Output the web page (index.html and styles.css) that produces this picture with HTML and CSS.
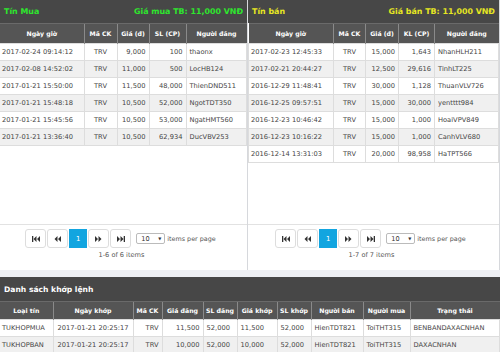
FILE: index.html
```html
<!DOCTYPE html>
<html lang="vi">
<head>
  <meta charset="UTF-8">
  <title>Tín Mua / Tín bán</title>
  <link rel="stylesheet" href="styles.css">
</head>
<body>

  <div class="top">
    <div class="panel">
      <div class="panel-head">
        <span class="buy">Tín Mua</span>
        <span class="buy">Giá mua TB: 11,000 VNĐ</span>
      </div>
      <div class="panel-body">
        <table class="grid">
          <colgroup><col style="width:84px"><col style="width:33px"><col style="width:32px"><col style="width:37px"><col></colgroup>
          <thead>
            <tr><th>Ngày giờ</th><th>Mã CK</th><th>Giá (đ)</th><th>SL (CP)</th><th>Người đăng</th></tr>
          </thead>
          <tbody>
            <tr><td>2017-02-24 09:14:12</td><td class="c">TRV</td><td class="r">9,000</td><td class="r">100</td><td>thaonx</td></tr>
            <tr><td>2017-02-08 14:52:02</td><td class="c">TRV</td><td class="r">11,000</td><td class="r">500</td><td>LocHB124</td></tr>
            <tr><td>2017-01-21 15:50:00</td><td class="c">TRV</td><td class="r">11,500</td><td class="r">48,000</td><td>ThienDND511</td></tr>
            <tr><td>2017-01-21 15:48:18</td><td class="c">TRV</td><td class="r">10,500</td><td class="r">52,000</td><td>NgotTDT350</td></tr>
            <tr><td>2017-01-21 15:45:56</td><td class="c">TRV</td><td class="r">10,500</td><td class="r">53,000</td><td>NgatHMT560</td></tr>
            <tr><td>2017-01-21 13:36:40</td><td class="c">TRV</td><td class="r">10,500</td><td class="r">62,934</td><td>DucVBV253</td></tr>
          </tbody>
        </table>
      </div>
      <div class="pager">
        <div class="pager-row">
          <div class="pages">
            <span class="pg"><svg width="8" height="6" viewBox="0 0 8 6"><rect x="0" y="0" width="1.3" height="6"/><path d="M4.5 0 1.5 3 4.5 6Z M8 0 5 3 8 6Z"/></svg></span>
            <span class="pg"><svg width="7" height="6" viewBox="0 0 7 6"><path d="M3.5 0 0.5 3 3.5 6Z M7 0 4 3 7 6Z"/></svg></span>
            <span class="pg active">1</span>
            <span class="pg"><svg width="7" height="6" viewBox="0 0 7 6"><path d="M0 0 3 3 0 6Z M3.5 0 6.5 3 3.5 6Z"/></svg></span>
            <span class="pg"><svg width="8" height="6" viewBox="0 0 8 6"><path d="M0 0 3 3 0 6Z M3.5 0 6.5 3 3.5 6Z"/><rect x="6.7" y="0" width="1.3" height="6"/></svg></span>
          </div>
          <span class="size">10 <span class="caret">▼</span></span>
          <span class="per">items per page</span>
        </div>
        <div class="info">1-6 of 6 items</div>
      </div>
    </div>

    <div class="panel">
      <div class="panel-head">
        <span class="sell">Tín bán</span>
        <span class="sell">Giá bán TB: 11,000 VNĐ</span>
      </div>
      <div class="panel-body">
        <table class="grid edge">
          <colgroup><col style="width:85px"><col style="width:32px"><col style="width:33px"><col style="width:36px"><col></colgroup>
          <thead>
            <tr><th>Ngày giờ</th><th>Mã CK</th><th>Giá (đ)</th><th>KL (CP)</th><th>Người đăng</th></tr>
          </thead>
          <tbody>
            <tr><td>2017-02-23 12:45:33</td><td class="c">TRV</td><td class="r">15,000</td><td class="r">1,643</td><td>NhanHLH211</td></tr>
            <tr><td>2017-02-21 20:44:27</td><td class="c">TRV</td><td class="r">12,500</td><td class="r">29,616</td><td>TinhLT225</td></tr>
            <tr><td>2016-12-29 11:48:41</td><td class="c">TRV</td><td class="r">30,000</td><td class="r">1,128</td><td>ThuanVLV726</td></tr>
            <tr><td>2016-12-25 09:57:51</td><td class="c">TRV</td><td class="r">15,000</td><td class="r">30,000</td><td>yentttt984</td></tr>
            <tr><td>2016-12-23 10:46:42</td><td class="c">TRV</td><td class="r">15,000</td><td class="r">1,000</td><td>HoaiVPV849</td></tr>
            <tr><td>2016-12-23 10:16:22</td><td class="c">TRV</td><td class="r">15,000</td><td class="r">1,000</td><td>CanhVLV680</td></tr>
            <tr><td>2016-12-14 13:31:03</td><td class="c">TRV</td><td class="r">20,000</td><td class="r">98,958</td><td>HaTPT566</td></tr>
          </tbody>
        </table>
      </div>
      <div class="pager">
        <div class="pager-row">
          <div class="pages">
            <span class="pg"><svg width="8" height="6" viewBox="0 0 8 6"><rect x="0" y="0" width="1.3" height="6"/><path d="M4.5 0 1.5 3 4.5 6Z M8 0 5 3 8 6Z"/></svg></span>
            <span class="pg"><svg width="7" height="6" viewBox="0 0 7 6"><path d="M3.5 0 0.5 3 3.5 6Z M7 0 4 3 7 6Z"/></svg></span>
            <span class="pg active">1</span>
            <span class="pg"><svg width="7" height="6" viewBox="0 0 7 6"><path d="M0 0 3 3 0 6Z M3.5 0 6.5 3 3.5 6Z"/></svg></span>
            <span class="pg"><svg width="8" height="6" viewBox="0 0 8 6"><path d="M0 0 3 3 0 6Z M3.5 0 6.5 3 3.5 6Z"/><rect x="6.7" y="0" width="1.3" height="6"/></svg></span>
          </div>
          <span class="size">10 <span class="caret">▼</span></span>
          <span class="per">items per page</span>
        </div>
        <div class="info">1-7 of 7 items</div>
      </div>
    </div>
  </div>

  <div class="matched">
    <div class="matched-head">Danh sách khớp lệnh</div>
    <table class="grid wide">
      <colgroup><col style="width:53px"><col style="width:80px"><col style="width:29px"><col style="width:41px"><col style="width:34px"><col style="width:40px"><col style="width:34px"><col style="width:52px"><col style="width:47px"><col></colgroup>
      <thead>
        <tr><th>Loại tín</th><th>Ngày khớp</th><th>Mã CK</th><th>Giá đăng</th><th>SL đăng</th><th>Giá khớp</th><th>SL khớp</th><th>Người bán</th><th>Người mua</th><th>Trạng thái</th></tr>
      </thead>
      <tbody>
        <tr><td>TUKHOPMUA</td><td class="c">2017-01-21 20:25:17</td><td class="r">TRV</td><td class="r">11,500</td><td>52,000</td><td>11,500</td><td>52,000</td><td>HienTDT821</td><td>ToiTHT315</td><td>BENBANDAXACNHAN</td></tr>
        <tr><td>TUKHOPBAN</td><td class="c">2017-01-21 20:25:17</td><td class="r">TRV</td><td class="r">10,000</td><td>52,000</td><td>10,000</td><td>52,000</td><td>HienTDT821</td><td>ToiTHT315</td><td>DAXACNHAN</td></tr>
      </tbody>
    </table>
  </div>

</body>
</html>
```

FILE: styles.css
```css
body { margin: 0; font-family: "DejaVu Sans", Verdana, sans-serif; background: #eef0f4; color: #444; }

.top {
  display: grid; grid-template-columns: 247px 251px; column-gap: 1px;
  background: #d6d8dc; width: 500px;
}
.panel { background: #fff; display: flex; flex-direction: column; height: 270px; }
.panel-head {
  height: 23px; background: #474747; display: flex; align-items: center;
  justify-content: space-between; padding: 0 4px; font-weight: bold; font-size: 7.9px;
}
.buy { color: #2ee62e; }
.sell { color: #e6e622; }
.panel-body { height: 201px; }

.grid { border-collapse: collapse; table-layout: fixed; width: 100%; }
.grid th {
  background: #555; color: #fff; font-weight: bold; font-size: 6.2px;
  height: 19px; padding: 0; border-left: 1px solid #8a8a8a; border-top: 1px solid #6a6a6a;
  text-align: center; white-space: nowrap;
}
.grid th:first-child { border-left: none; }
.grid td {
  font-size: 6.7px; height: 16px; padding: 0 3px; border: 1px solid #ddd;
  white-space: nowrap; overflow: hidden;
}
.grid td:first-child { border-left: none; padding-left: 2px; }
.grid tbody tr:nth-child(even) td { background: #f0f0f0; }
.grid.edge td:first-child { border-left: 1px solid #ddd; }
.grid.edge td:last-child { border-right: 1px solid #ddd; }
.grid .c { text-align: center; }
.grid .r { text-align: right; }

.pager {
  height: 46px; border-top: 1px solid #e2e2e2; box-sizing: border-box;
  display: flex; flex-direction: column; align-items: center; padding-top: 4px;
}
.pager-row { display: flex; align-items: center; gap: 5px; margin-left: -6px; }
.pages { display: flex; gap: 1px; }
.pg {
  width: 19px; height: 17px; border: 1px solid #ddd; border-radius: 3px; background: #fff;
  display: flex; align-items: center; justify-content: center; fill: #333;
}
.pg.active {
  width: 16px; background: #12a5e0; border-color: #12a5e0; color: #fff;
  font-size: 6.8px; border-radius: 0;
}
.size {
  width: 29px; height: 11px; box-sizing: border-box; border: 1px solid #bbb; border-radius: 2px;
  font-size: 6.6px; color: #333; display: flex; align-items: center; justify-content: space-between;
  padding: 0 3px 0 4px;
}
.caret { font-size: 4px; }
.per { font-size: 6.4px; color: #555; margin-left: -3px; }
.info { font-size: 6.6px; color: #555; margin-top: 3px; margin-left: -4px; }

.matched { margin-top: 7px; background: #fff; }
.matched-head {
  height: 24px; background: #474747; color: #fff; font-weight: bold; font-size: 7.6px;
  display: flex; align-items: center; padding-left: 4px;
}
.wide th { height: 17px; }
```
